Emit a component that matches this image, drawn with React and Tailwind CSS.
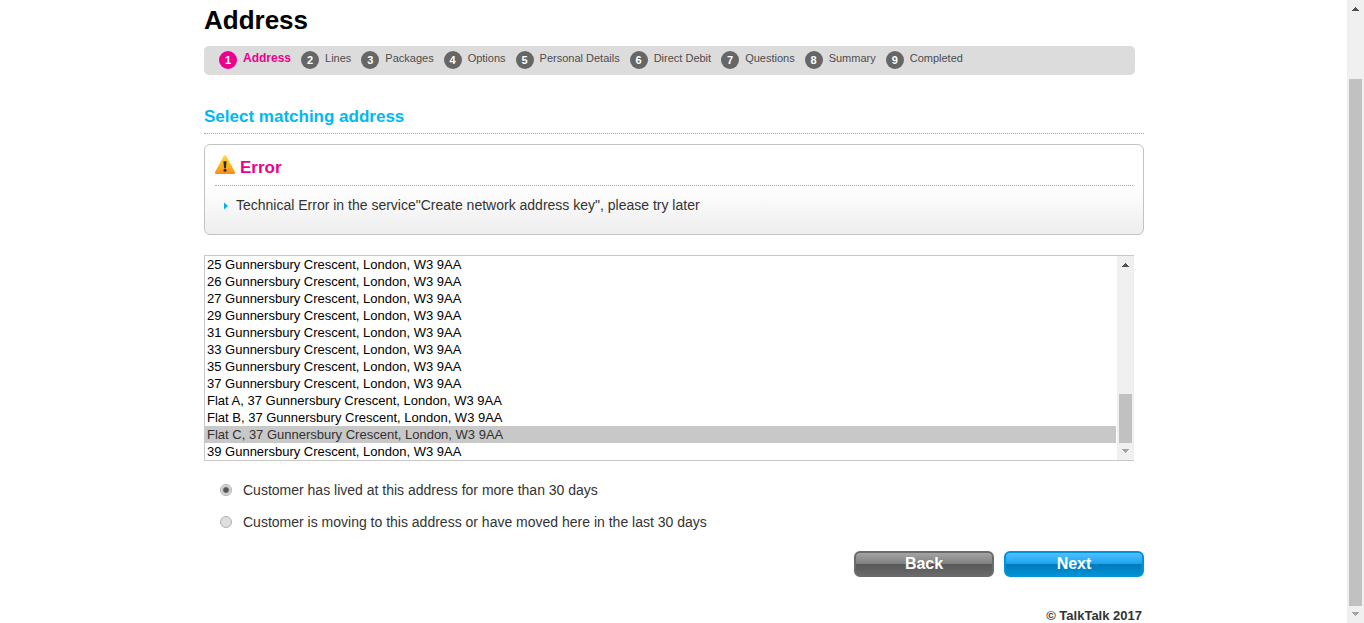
import React from 'react';

const steps = [
  'Address',
  'Lines',
  'Packages',
  'Options',
  'Personal Details',
  'Direct Debit',
  'Questions',
  'Summary',
  'Completed',
];

const addresses = [
  '25 Gunnersbury Crescent, London, W3 9AA',
  '26 Gunnersbury Crescent, London, W3 9AA',
  '27 Gunnersbury Crescent, London, W3 9AA',
  '29 Gunnersbury Crescent, London, W3 9AA',
  '31 Gunnersbury Crescent, London, W3 9AA',
  '33 Gunnersbury Crescent, London, W3 9AA',
  '35 Gunnersbury Crescent, London, W3 9AA',
  '37 Gunnersbury Crescent, London, W3 9AA',
  'Flat A, 37 Gunnersbury Crescent, London, W3 9AA',
  'Flat B, 37 Gunnersbury Crescent, London, W3 9AA',
  'Flat C, 37 Gunnersbury Crescent, London, W3 9AA',
  '39 Gunnersbury Crescent, London, W3 9AA',
];

function ArrowUp() {
  return (
    <svg className="block h-[17px] w-[17px] shrink-0" viewBox="0 0 17 17" shapeRendering="crispEdges" aria-hidden="true">
      <path d="M8 7h1v1h1v1h1v1h1v1H5v-1h1V9h1V8h1z" fill="#505050" />
    </svg>
  );
}

function ArrowDown() {
  return (
    <svg className="block h-[17px] w-[17px] shrink-0" viewBox="0 0 17 17" shapeRendering="crispEdges" aria-hidden="true">
      <path d="M5 6h7v1h-1v1h-1v1H9v1H8V9H7V8H6V7H5z" fill="#a3a3a3" />
    </svg>
  );
}

function Steps() {
  return (
    <ol className="mr-[9px] mt-[11px] flex h-[29px] gap-2.5 rounded-[5px] bg-[#dcdcdc] pl-[15px] pt-[5px]">
      {steps.map((name, i) => (
        <li
          key={name}
          className={
            i === 0
              ? 'flex gap-1.5 text-xs font-bold text-[#ec008c]'
              : 'flex gap-1.5 text-[11px] text-[#4d4d4d]'
          }
        >
          <span
            className={
              i === 0
                ? 'flex h-[18px] w-[18px] items-center justify-center rounded-full bg-[#ec008c] text-[11px] font-bold leading-none text-white'
                : 'flex h-[18px] w-[18px] items-center justify-center rounded-full bg-[#666666] text-[11px] font-bold leading-none text-white'
            }
          >
            {i + 1}
          </span>
          <span className="leading-[14px]">{name}</span>
        </li>
      ))}
    </ol>
  );
}

function ErrorPanel() {
  return (
    <section className="mt-2.5 h-[91px] rounded-md border border-[#c3c3c3] bg-linear-to-b from-white from-45% to-[#eeeeee] px-2.5 pt-2.5">
      <div className="flex h-[31px] border-b border-dotted border-[#a8a8a8]">
        <svg className="h-5 w-5" viewBox="0 0 20 20" aria-hidden="true">
          <defs>
            <linearGradient id="warning" x1="0" y1="0" x2="0" y2="1">
              <stop offset="0" stopColor="#ffd93b" />
              <stop offset="0.55" stopColor="#ffb51c" />
              <stop offset="1" stopColor="#f68b1f" />
            </linearGradient>
          </defs>
          <path d="M10 .2c.6 0 1 .3 1.300.9l8.500 15.700c.6 1.200 0 2.200-1.200 2.200H1.400C.2 19-.4 18 .2 16.800L8.700 1.100C9 .5 9.400.2 10 .2z" fill="url(#warning)" />
          <path d="M8.400 6.200h3.200l-.7 7H9.100z" fill="#2d2a26" />
          <circle cx="10" cy="15.300" r="1.500" fill="#2d2a26" />
        </svg>
        <h3 className="ml-[5px] mt-px text-[17px] font-bold leading-6 text-[#ec008c]">Error</h3>
      </div>
      <ul className="mt-[9px]">
        <li className="flex items-center pl-2 text-sm leading-5">
          <svg className="mt-0.5 h-2 w-[5px]" viewBox="0 0 5 8" aria-hidden="true">
            <path d="M1 .5l4 3.500L1 7.500z" fill="#00b3ee" />
          </svg>
          <span className="ml-2">
            Technical Error in the service"Create network address key", please try later
          </span>
        </li>
      </ul>
    </section>
  );
}

function AddressList() {
  return (
    <div className="mr-2.5 mt-5 flex border border-r-0 border-[#c8c8c8]">
      <select
        size={12}
        aria-label="Matching addresses"
        defaultValue={addresses[10]}
        className="h-[204px] min-w-0 flex-1 appearance-none overflow-hidden bg-white p-0 text-[13px] text-black outline-none [scrollbar-width:none]"
      >
        {addresses.map((a) => (
          <option
            key={a}
            value={a}
            className="h-[17px] min-h-0 px-0.5 pb-0 pt-px text-black checked:bg-[linear-gradient(#c8c8c8,#c8c8c8)] checked:text-[#323232]"
          >
            {a}
          </option>
        ))}
      </select>
      <div className="ml-px flex w-[17px] flex-col items-center justify-between bg-[#f0f0f0]" aria-hidden="true">
        <ArrowUp />
        <div className="mt-auto h-[49px] w-[13px] bg-[#c1c1c1]" />
        <ArrowDown />
      </div>
    </div>
  );
}

function Choice({ id, label, defaultChecked }) {
  return (
    <div className="flex h-8 items-center pl-4">
      <input
        id={id}
        type="radio"
        name="residency"
        defaultChecked={defaultChecked}
        className="h-3 w-3 appearance-none rounded-full border border-[#b0b0b0] bg-[#dedede] checked:bg-[radial-gradient(circle,#555555_0_2px,#dedede_4px)]"
      />
      <label htmlFor={id} className="ml-[11px] text-sm">
        {label}
      </label>
    </div>
  );
}

export default function App() {
  return (
    <div className="flex min-h-screen bg-white font-['Liberation_Sans',Arial,sans-serif] text-[#333333]">
      <div className="min-w-0 flex-1 pl-px">
        <main className="mx-auto max-w-[940px]">
          <h1 className="pt-[5px] text-[26px] font-bold leading-[30px] text-black">Address</h1>
          <Steps />
          <h2 className="mt-[29px] h-[30px] border-b border-dotted border-[#a8a8a8] text-[17px] font-bold leading-[26px] text-[#00b9f2]">
            Select matching address
          </h2>
          <ErrorPanel />
          <form onSubmit={(e) => e.preventDefault()}>
            <AddressList />
            <div className="mt-[13px]">
              <Choice id="lived" label="Customer has lived at this address for more than 30 days" defaultChecked />
              <Choice id="moving" label="Customer is moving to this address or have moved here in the last 30 days" />
            </div>
            <div className="mt-[13px] flex justify-end gap-2.5">
              <button
                type="button"
                className="h-[26px] w-[140px] rounded-md border-2 border-[#6b6b6b] bg-[linear-gradient(#a4a4a4,#7f7f7f_50%,#575757_50%,#696969)] text-base font-bold leading-[22px] text-white"
              >
                Back
              </button>
              <button
                type="submit"
                className="h-[26px] w-[140px] rounded-md border-2 border-[#0093dc] bg-[linear-gradient(#52bfff,#18a5ee_50%,#0079b8_50%,#0091d6)] text-base font-bold leading-[22px] text-white"
              >
                Next
              </button>
            </div>
          </form>
          <footer className="mt-[31px] pr-0.5 text-right text-[13px] font-bold leading-[15px]">© TalkTalk 2017</footer>
        </main>
      </div>
      <div className="flex w-[17px] shrink-0 flex-col items-center bg-[#f0f0f0]" aria-hidden="true">
        <ArrowUp />
        <div className="mt-[62px] w-[13px] flex-1 bg-[#c1c1c1]" />
        <ArrowDown />
      </div>
    </div>
  );
}
